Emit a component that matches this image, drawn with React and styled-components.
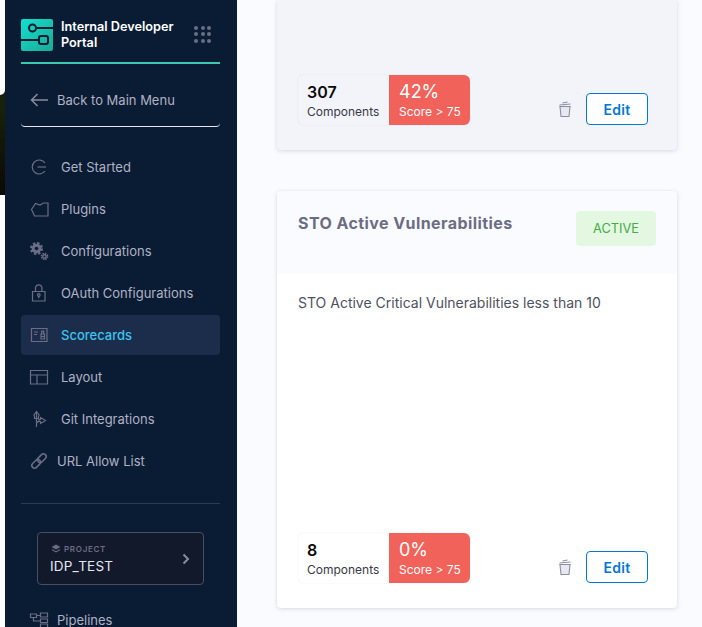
import React from "react";
import styled, { createGlobalStyle } from "styled-components";

const Global = createGlobalStyle`
  html, body { margin: 0; padding: 0; background: #fafbff; }
  body { font-family: Inter, "Liberation Sans", sans-serif; }
  * { box-sizing: border-box; }
`;

const Page = styled.div`
  width: 702px; height: 627px; display: flex; overflow: hidden; background: #fafbff;
`;
const Edge = styled.div`
  width: 5px; flex: none; background: #fff;
`;
const EdgePhoto = styled.div`
  height: 195px;
  background: linear-gradient(180deg, #121c06 0%, #172307 55%, #141708 72%, #0b0906 100%);
`;
const EdgeGap = styled.div`
  height: 95px; background: #fff; border-bottom-right-radius: 7px;
`;
const Sidebar = styled.nav`
  width: 232px; flex: none; height: 627px; overflow: hidden; background: #0a1c33;
  padding: 19px 17px 0 16px; display: flex; flex-direction: column;
`;
const Brand = styled.div`
  display: flex; align-items: center; height: 32px; flex: none;
`;
const BrandLogo = styled.svg`
  width: 32px; height: 32px; flex: none; margin-right: 8px;
`;
const BrandName = styled.div`
  width: 133px; color: #fff; font-size: 12.7px; line-height: 16px; font-weight: 600;
`;
const Dots = styled.div`
  display: grid; grid-template-columns: repeat(3, 4px); gap: 2.5px; margin-top: -2px;
  span { width: 4px; height: 4px; border-radius: 50%; background: #6b6d85; }
`;
const TealRule = styled.div`
  height: 2px; margin-top: 11px; background: #3dc7b0; flex: none;
`;
const Back = styled.div`
  height: 63px; flex: none; display: flex; align-items: center; gap: 9px; padding: 9px 0 0 9px;
  color: #b0b1c4; font-size: 13px; border-bottom: 1px solid #e6e7ee;
  border-radius: 0 0 4px 4px;
`;
const ItemList = styled.div`
  margin-top: 20px; display: flex; flex-direction: column; gap: 2px; flex: none;
`;
const Item = styled.div`
  height: 40px; display: flex; align-items: center; padding-left: ${p => p.$pad || 40}px; position: relative;
  border-radius: 4px; font-size: 13px;
  font-weight: ${p => (p.$active ? 500 : 400)};
  background: ${p => (p.$active ? "#1b2d4b" : "transparent")};
  color: ${p => (p.$active ? "#3dc4f0" : "#b0b1c4")};
`;
const ItemIcon = styled.svg`
  position: absolute; left: 9px; top: 11px; width: 18px; height: 18px; fill: none;
  stroke: #6b6d85; stroke-width: 1.2; overflow: visible;
`;
const Divider = styled.div`
  height: 1px; margin-top: 22px; background: #2b3a50; flex: none;
`;
const Project = styled.div`
  margin: 28px 16px 0; height: 53px; flex: none; padding: 10px 12px 0; position: relative;
  background: #12192b; border: 1px solid #484e5e; border-radius: 4px;
`;
const ProjectLabel = styled.div`
  display: flex; align-items: center; gap: 3px; font-size: 8px; font-weight: 600; letter-spacing: 0.7px; color: #6b6d85; line-height: 12px; padding-left: 1px;
`;
const ProjectName = styled.div`
  color: #e6e7ee; font-size: 13.5px; line-height: 18px; margin-top: 2px; letter-spacing: 0.2px;
`;
const Chevron = styled.svg`
  position: absolute; right: 12px; top: 20px; width: 10px; height: 12px;
`;
const Pipelines = styled(Item)`
  margin-top: 15px; flex: none;
`;

const Main = styled.main`
  flex: 1; padding: 0 25px 0 40px; display: flex; flex-direction: column; gap: 41px;
`;
const TopCard = styled.section`
  height: 150px; flex: none; background: #f3f4f9; border-radius: 0 0 4px 4px;
  box-shadow: 0 1px 4px rgba(96, 97, 112, 0.22);
  padding: 75px 29px 0 21px;
`;
const Card = styled.section`
  height: 417px; flex: none; background: #fff; border-radius: 4px; overflow: hidden;
  box-shadow: 0 0 1px rgba(40, 41, 61, 0.08), 0 1px 4px rgba(96, 97, 112, 0.2);
  display: flex; flex-direction: column;
`;
const CardHead = styled.header`
  height: 83px; flex: none; background: #fafbfe; padding: 20px 21px 0;
  display: flex; justify-content: space-between; align-items: flex-start;
`;
const Title = styled.h2`
  margin: 2px 0 0; font-size: 16px; line-height: 20px; font-weight: 700; letter-spacing: 0.42px; color: #6b6d85;
`;
const Badge = styled.span`
  width: 80px; height: 35px; display: flex; align-items: center; justify-content: center;
  background: #e4f7e1; border-radius: 4px; color: #42ab45; font-size: 12.8px;
`;
const Desc = styled.p`
  margin: 20px 21px 0; font-size: 14px; line-height: 18px; color: #4f5162;
`;
const Footer = styled.footer`
  display: flex; align-items: flex-end; justify-content: space-between;
`;
const CardFooter = styled(Footer)`
  margin-top: auto; padding: 0 29px 25px 21px;
`;
const Stats = styled.div`
  display: flex; width: 172px; height: 50px; border-radius: 6px; overflow: hidden;
  box-shadow: 0 0 1px rgba(40, 41, 61, 0.25);
`;
const StatLeft = styled.div`
  width: 91px; padding: 7px 0 0 9px; background: ${p => p.$bg};
`;
const StatRight = styled.div`
  width: 81px; padding: 7px 0 0 10px; background: #f1625a; color: #fff;
`;
const BigNum = styled.div`
  font-size: 16px; line-height: 20px; font-weight: 600; color: #0b0b0d;
`;
const Pct = styled.div`
  font-size: 18px; line-height: 20px; font-weight: 400;
`;
const SmallLabel = styled.div`
  font-size: 12px; line-height: 16px; margin-top: 2px; color: ${p => p.$color};
`;
const Actions = styled.div`
  display: flex; align-items: center; gap: 13px;
`;
const Trash = styled.svg`
  width: 16px; height: 18px; fill: none; stroke: #8c8ea3; stroke-width: 1.1;
`;
const EditBtn = styled.button`
  width: 62px; height: 32px; background: #fff; border: 1px solid #0278d5; border-radius: 4px;
  color: #0278d5; font: 600 14px Inter, sans-serif; letter-spacing: 0.3px; padding: 0;
`;

const TrashIcon = () => (
  <Trash viewBox="0 0 16 18">
    <path d="M3 6.500h10l-1 10H4z" fill="#e8e9f0" />
    <path d="M2.500 5 13.500 4M5.500 3l5-1" />
    <path d="M2.500 6.500h11" />
  </Trash>
);

const Stat = ({ count, pct, bg }) => (
  <Stats>
    <StatLeft $bg={bg}>
      <BigNum>{count}</BigNum>
      <SmallLabel $color="#383946">Components</SmallLabel>
    </StatLeft>
    <StatRight>
      <Pct>{pct}</Pct>
      <SmallLabel $color="#fff">Score &gt; 75</SmallLabel>
    </StatRight>
  </Stats>
);

const FootActions = () => (
  <Actions>
    <TrashIcon />
    <EditBtn>Edit</EditBtn>
  </Actions>
);

const icons = {
  start: <><path d="M15 5A7 7 0 1 0 15 13" /><path d="M7.500 9h8.500" /></>,
  plugin: <path d="M1.500 9.500 5.500 3.500l4.500 1.500 3.500-2H18V16H4.500L3 12.500z" />,
  lock: <><path d="M2.500 7.500h12.500v9.500H2.500z" /><path d="M5.500 7.500V4a3.200 3.200 0 0 1 6.400 0v3.500" /><circle cx="8.800" cy="11" r="1.300" /><path d="M8.800 12.300v2" /></>,
  score: <><path d="M1.500 2.500h15.500v13H1.500z" /><path d="M4 6h4M4 8.500h3" /><path d="M11 8h3.500v5H11zM11.700 8V5.200h2V8M11 10.500h3.500" /></>,
  layout: <><path d="M.5 2.500h17v13.500H.5z" /><path d="M.5 7h17M7 7v9" /></>,
  git: <><path d="M6.500 17V3M3.500 5.500 6.500 1.500 9.500 5.500M4.500 5.500v3h4v-3M6.500 13l3-2.500M10.500 7.500v2H9v2h1.500v2l5-3z" /></>,
  link: <g transform="rotate(-45 9 9)"><rect x="0" y="6.300" width="10" height="5.400" rx="2.700" strokeWidth="1.500" /><rect x="8" y="6.300" width="10" height="5.400" rx="2.700" strokeWidth="1.500" /></g>,
  pipe: <><path d="M.5 3h6v3.500h-6zM10.500 2h7v4h-7zM10.500 8h7v3.500h-7zM10.500 13h7v3.500h-7zM6.500 4.500h4M3.500 6.500V10h7" /></>,
};

const Gears = () => (
  <ItemIcon viewBox="0 0 18 18" style={{ stroke: "none", fill: "#6b6d85" }}>
    <circle cx="6.500" cy="6.500" r="5.200" fill="none" stroke="#6b6d85" strokeWidth="2.600" strokeDasharray="2.300 1.780" />
    <circle cx="6.500" cy="6.500" r="4.800" />
    <circle cx="6.500" cy="6.500" r="1.800" fill="#0a1c33" />
    <circle cx="14.500" cy="14.500" r="3" fill="none" stroke="#6b6d85" strokeWidth="1.600" strokeDasharray="1.400 0.960" />
    <circle cx="14.500" cy="14.500" r="2.400" />
    <circle cx="14.500" cy="14.500" r="1" fill="#0a1c33" />
  </ItemIcon>
);

const nav = [
  { label: "Get Started", icon: "start" },
  { label: "Plugins", icon: "plugin" },
  { label: "Configurations", gears: true },
  { label: "OAuth Configurations", icon: "lock" },
  { label: "Scorecards", icon: "score", active: true },
  { label: "Layout", icon: "layout" },
  { label: "Git Integrations", icon: "git" },
  { label: "URL Allow List", icon: "link", pad: 36 },
];

export default function App() {
  return (
    <Page>
      <Global />
      <Edge>
        <EdgePhoto>
          <EdgeGap />
        </EdgePhoto>
      </Edge>
      <Sidebar>
        <Brand>
          <BrandLogo viewBox="0 0 32 32">
            <defs>
              <linearGradient id="lg" x1="0" y1="0" x2="1" y2="1">
                <stop offset="0" stopColor="#12e0cf" />
                <stop offset="1" stopColor="#1ba994" />
              </linearGradient>
            </defs>
            <rect width="32" height="32" rx="2" fill="url(#lg)" />
            <g fill="none" stroke="#0a1c33" strokeWidth="2">
              <circle cx="11.500" cy="9" r="3.500" />
              <path d="M15 9h17M0 21h17" />
              <rect x="18" y="17" width="9" height="8" rx="2" />
            </g>
          </BrandLogo>
          <BrandName>Internal Developer Portal</BrandName>
          <Dots>
            {Array.from({ length: 9 }, (_, i) => <span key={i} />)}
          </Dots>
        </Brand>
        <TealRule />
        <Back>
          <svg width="18" height="14" viewBox="0 0 18 14" fill="none" stroke="#8a8ba0" strokeWidth="1.500">
            <path d="M18 7H1.500M7.500 1 1.500 7l6 6" />
          </svg>
          Back to Main Menu
        </Back>
        <ItemList>
          {nav.map(n => (
            <Item key={n.label} $active={n.active} $pad={n.pad}>
              {n.gears ? <Gears /> : <ItemIcon viewBox="0 0 18 18">{icons[n.icon]}</ItemIcon>}
              {n.label}
            </Item>
          ))}
        </ItemList>
        <Divider />
        <Project>
          <ProjectLabel>
            <svg width="10" height="10" viewBox="0 0 10 10" fill="#6b6d85">
              <path d="M5 .5 9.500 3 5 5.500.5 3z" />
              <path d="M1 5l4 2.200L9 5v1.300L5 8.600 1 6.300z" />
            </svg>
            PROJECT
          </ProjectLabel>
          <ProjectName>IDP_TEST</ProjectName>
          <Chevron viewBox="0 0 10 12" fill="none" stroke="#8a8ba0" strokeWidth="2">
            <path d="M2.500 1.500 7 6l-4.500 4.500" />
          </Chevron>
        </Project>
        <Pipelines $pad={36}>
          <ItemIcon viewBox="0 0 18 18">{icons.pipe}</ItemIcon>
          Pipelines
        </Pipelines>
      </Sidebar>
      <Main>
        <TopCard>
          <Footer>
            <Stat count="307" pct="42%" bg="#f3f4f9" />
            <FootActions />
          </Footer>
        </TopCard>
        <Card>
          <CardHead>
            <Title>STO Active Vulnerabilities</Title>
            <Badge>ACTIVE</Badge>
          </CardHead>
          <Desc>STO Active Critical Vulnerabilities less than 10</Desc>
          <CardFooter>
            <Stat count="8" pct="0%" bg="#fff" />
            <FootActions />
          </CardFooter>
        </Card>
      </Main>
    </Page>
  );
}
